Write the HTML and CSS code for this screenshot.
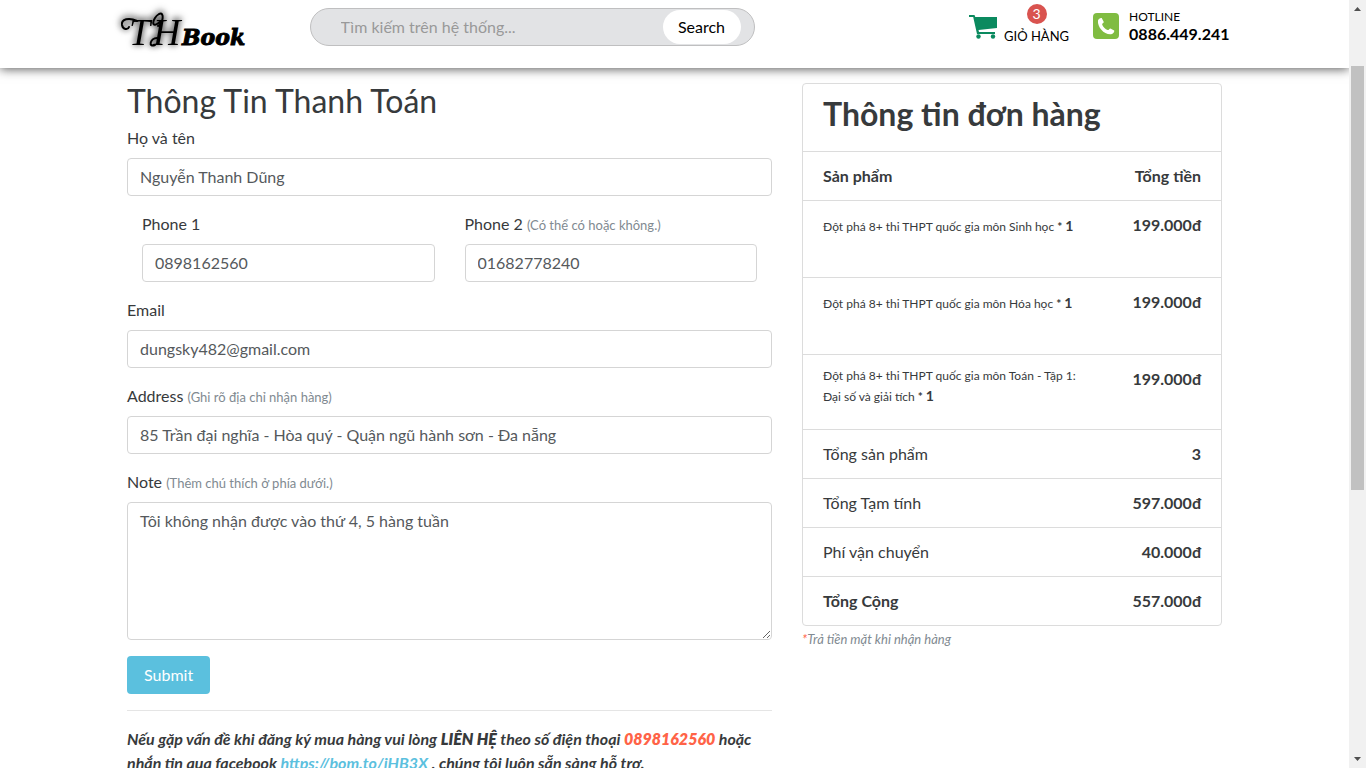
FILE: index.html
```html
<!DOCTYPE html>
<html lang="vi">
<head>
<meta charset="utf-8">
<meta name="viewport" content="width=device-width, initial-scale=1">
<title>TH Book - Thanh toán</title>
<link rel="stylesheet" href="styles.css">
</head>
<body>
<div class="window">
  <div class="page">
    <header class="site-header">
      <div class="header-inner">
        <a class="logo" href="#" aria-label="TH Book">
          <svg width="130" height="48" viewBox="0 0 130 48" aria-hidden="true">
            <g class="logo-mark">
              <text class="logo-th" x="9" y="41">T</text>
              <text class="logo-th" x="33" y="41">H</text>
              <path d="M17 17C9 13 1 15 2 21C3 26 8 26 9 23M41 17C30 27 32 14 39 10C45 7 43 20 38 22M35 41C28 44 30 34 37 34"/>
            </g>
            <text class="logo-book" x="62" y="41">Book</text>
          </svg>
        </a>
        <form class="search" role="search">
          <input class="search-input" type="text" aria-label="Tìm kiếm" placeholder="Tìm kiếm trên hệ thống...">
          <button class="search-button" type="button">Search</button>
        </form>
        <div class="header-tools">
          <a class="cart" href="#">
            <svg class="cart-icon" width="29" height="25" viewBox="0 0 29 25" aria-hidden="true">
              <path fill="#0b8a5f" d="M0 0h5.500l.8 2H28v11L9.500 15l.5 2h16v2H8L4.200 2H0z"/>
              <circle cx="9.500" cy="21.500" r="2.200" fill="#0b8a5f"/><circle cx="24" cy="21.500" r="2.200" fill="#0b8a5f"/>
            </svg>
            <span class="cart-text"><span class="badge">3</span><span>GIỎ HÀNG</span></span>
          </a>
          <a class="hotline" href="#">
            <svg width="26" height="26" viewBox="0 0 26 26" aria-hidden="true">
              <rect width="26" height="26" rx="4" fill="#80bc42"/>
              <path fill="#fff" d="M5 7.500C5.500 5.800 7.600 4.600 8.700 5.100L10.800 9.100C10.700 10.200 8.900 10.500 9.200 11.700C10.300 14.200 12.400 16 14.600 17C15.800 17.300 16.300 15.400 17.400 15.400L21.200 17.600C21.700 19 20 21 18.200 21.300C11.600 22.200 4.100 14.200 5 7.500z"/>
            </svg>
            <span class="hotline-text"><span>HOTLINE</span><strong>0886.449.241</strong></span>
          </a>
        </div>
      </div>
    </header>

    <main class="content">
      <section class="column">
        <h2 class="title">Thông Tin Thanh Toán</h2>
        <form>
          <div class="field">
            <label for="name">Họ và tên</label>
            <input class="control" id="name" type="text" value="Nguyễn Thanh Dũng">
          </div>
          <div class="field-row">
            <div class="field">
              <label for="phone1">Phone 1</label>
              <input class="control" id="phone1" type="text" value="0898162560">
            </div>
            <div class="field">
              <label for="phone2">Phone 2 <small>(Có thể có hoặc không.)</small></label>
              <input class="control" id="phone2" type="text" value="01682778240">
            </div>
          </div>
          <div class="field">
            <label for="email">Email</label>
            <input class="control" id="email" type="email" value="dungsky482@gmail.com">
          </div>
          <div class="field">
            <label for="address">Address <small>(Ghi rõ địa chỉ nhận hàng)</small></label>
            <input class="control" id="address" type="text" value="85 Trần đại nghĩa - Hòa quý - Quận ngũ hành sơn - Đa nẵng">
          </div>
          <div class="field">
            <label for="note">Note <small>(Thêm chú thích ở phía dưới.)</small></label>
            <textarea class="control" id="note" rows="5">Tôi không nhận được vào thứ 4, 5 hàng tuần</textarea>
          </div>
          <button class="submit" type="button">Submit</button>
        </form>
        <hr class="rule">
        <p class="help">Nếu gặp vấn đề khi đăng ký mua hàng vui lòng <b>LIÊN HỆ</b> theo số điện thoại <b class="phone">0898162560</b> hoặc nhắn tin qua facebook <a href="#">https://bom.to/iHB3X</a> , chúng tôi luôn sẵn sàng hỗ trợ.</p>
      </section>

      <aside class="column">
        <div class="order">
          <h2 class="title order-title">Thông tin đơn hàng</h2>
          <table class="order-table">
            <thead>
              <tr><th scope="col">Sản phẩm</th><th class="amount" scope="col">Tổng tiền</th></tr>
            </thead>
            <tbody>
              <tr class="product"><td>Đột phá 8+ thi THPT quốc gia môn Sinh học <b>* <span class="qty">1</span></b></td><td class="amount">199.000đ</td></tr>
              <tr class="product"><td>Đột phá 8+ thi THPT quốc gia môn Hóa học <b>* <span class="qty">1</span></b></td><td class="amount">199.000đ</td></tr>
              <tr class="product long"><td>Đột phá 8+ thi THPT quốc gia môn Toán - Tập 1: Đại số và giải tích <b>* <span class="qty">1</span></b></td><td class="amount">199.000đ</td></tr>
              <tr><td>Tổng sản phẩm</td><td class="amount">3</td></tr>
              <tr><td>Tổng Tạm tính</td><td class="amount">597.000đ</td></tr>
              <tr><td>Phí vận chuyển</td><td class="amount">40.000đ</td></tr>
            </tbody>
            <tfoot>
              <tr><th scope="row">Tổng Cộng</th><td class="amount">557.000đ</td></tr>
            </tfoot>
          </table>
        </div>
        <p class="cash-note"><span>*</span>Trả tiền mặt khi nhận hàng</p>
      </aside>
    </main>
  </div>
  <div class="scrollbar" aria-hidden="true">
    <svg width="17" height="17" viewBox="0 0 17 17"><path fill="#505050" d="M5 11h7L8.500 7z"/></svg>
    <div class="track"><div class="thumb"></div></div>
    <svg width="17" height="17" viewBox="0 0 17 17"><path fill="#505050" d="M5 6h7L8.500 10z"/></svg>
  </div>
</div>
</body>
</html>
```
FILE: styles.css
```css
* { box-sizing: border-box; }
body {
  margin: 0;
  color: #373a3c;
  background: #fff;
  font: 400 16px/24px Lato, "Liberation Sans", sans-serif;
}
a { color: inherit; text-decoration: none; }
input, textarea, button { font: inherit; }

.window { display: flex; height: 100vh; overflow: hidden; }
.page { flex: 1; min-width: 0; overflow: hidden; }

.site-header {
  height: 68px;
  color: #000;
  background: #fff;
  box-shadow: 0 1px 10px #555;
}
.header-inner {
  display: grid;
  grid-template-columns: 190px minmax(200px, 445px) 1fr;
  max-width: 1110px;
  margin: 0 auto;
  padding-top: 4px;
}
.logo { height: 48px; }
.logo svg { display: block; overflow: visible; }
.logo-mark { filter: drop-shadow(0 0 3px #0009) drop-shadow(0 -2px 3px #0007); }
.logo-mark path { fill: none; stroke: #000; stroke-width: 2; stroke-linecap: round; }
.logo-th { font: italic 400 38px "Liberation Serif", serif; }
.logo-book { font: italic 700 22px "DejaVu Serif", "Liberation Serif", serif; stroke: #000; stroke-width: 1; }

.search {
  display: flex;
  align-items: center;
  height: 38px;
  margin-top: 4px;
  padding: 1px 13px 1px 30px;
  background: #e2e3e5;
  border: 1px solid #bfbfc0;
  border-radius: 19px;
}
.search-input {
  flex: 1;
  min-width: 0;
  padding: 0;
  border: 0;
  background: none;
}
.search-input::placeholder { color: #999; opacity: 1; }
.search-button {
  width: 78px;
  height: 34px;
  padding: 0;
  border: 0;
  border-radius: 17px;
  background: #fff;
  color: #000;
}

.header-tools { display: flex; justify-content: flex-end; gap: 24px; }
.cart { display: flex; gap: 6px; font-size: 13px; line-height: 24px; }
.cart-icon { margin-top: 11px; }
.cart-text { display: flex; flex-direction: column; align-items: center; }
.badge {
  width: 20px;
  height: 20px;
  border-radius: 10px;
  background: #d9534f;
  color: #fff;
  font-size: 14px;
  line-height: 20px;
  text-align: center;
}
.hotline { display: flex; gap: 10px; padding-top: 4px; }
.hotline svg { margin-top: 5px; }
.hotline-text { display: flex; flex-direction: column; font-size: 12px; line-height: 17px; }
.hotline-text strong { font-size: 16px; }

.content {
  display: grid;
  grid-template-columns: 3fr 2fr;
  max-width: 1125px;
  margin: 0 auto;
  padding-top: 15px;
}
.column { min-width: 0; padding: 0 15px; }
.title { margin: 0 0 8px; font-size: 32px; line-height: 35px; font-weight: 400; }

.field { margin-bottom: 16px; }
.field label { display: block; margin-bottom: 8px; }
.field small { color: #818a91; font-size: 13px; line-height: 16px; }
.field-row { display: grid; grid-template-columns: 1fr 1fr; gap: 30px; padding: 0 15px; }
.control {
  display: block;
  width: 100%;
  padding: 6px 12px;
  border: 1px solid #d5d5d5;
  border-radius: 4px;
  background: #fff;
  color: #55595c;
}
textarea.control { height: 138px; resize: vertical; }
.submit {
  display: block;
  height: 38px;
  padding: 0 17px;
  border: 0;
  border-radius: 4px;
  background: #5bc0de;
  color: #fff;
}
.rule { margin: 16px 0; border: 0; border-top: 1px solid #e5e5e5; }
.help { margin: 0; font-style: italic; font-weight: 700; }
.help b { font-weight: 800; }
.help .phone { color: #ff6347; }
.help a { color: #5bc0de; }

.order { border: 1px solid #dcdcdc; border-radius: 4px; }
.order-title { margin: 0; padding: 12px 20px 20px; font-weight: 700; }
.order-table { width: 100%; border-spacing: 0; }
.order-table th, .order-table td {
  padding: 12px 20px;
  border-top: 1px solid #dcdcdc;
  text-align: left;
  vertical-align: top;
}
.order-table th { font-weight: 700; }
.order-table .amount { text-align: right; font-weight: 700; }
.product td:first-child { font-size: 12px; line-height: 26px; }
.product .amount { padding-bottom: 40px; }
.product b { font-weight: 700; }
.product .qty { font-size: 14px; }
.product.long td:first-child { padding-top: 11px; padding-bottom: 10px; line-height: 20px; }
.product.long .amount { padding-bottom: 38px; }

.cash-note { margin: 1px 0 0; color: #818a91; font-size: 13px; font-style: italic; }
.cash-note span { color: #ff6347; }

.scrollbar {
  flex: 0 0 17px;
  display: flex;
  flex-direction: column;
  justify-content: space-between;
  background: #f1f1f1;
}
.track { flex: 1; padding: 49px 2px 0; }
.thumb { height: 62%; max-height: 424px; background: #c1c1c1; }
```
